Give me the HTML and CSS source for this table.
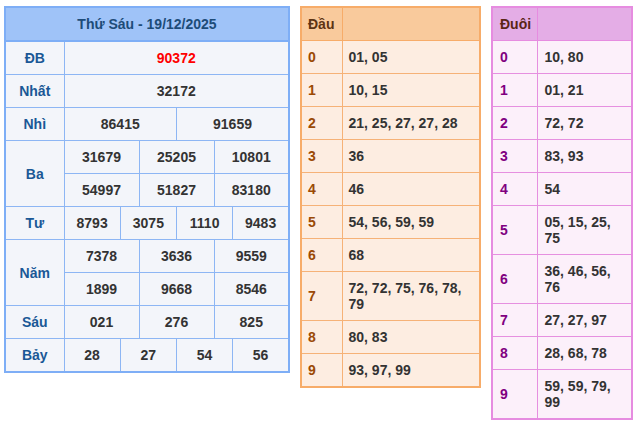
FILE: index.html
```html
<!DOCTYPE html>
<html lang="vi">
<head>
<meta charset="utf-8">
<title>Kết quả xổ số</title>
<link rel="stylesheet" href="styles.css">
</head>
<body>
<div class="wrap">
  <table class="kq">
    <colgroup>
      <col class="c-label">
      <col><col><col><col><col><col><col><col><col><col><col><col>
    </colgroup>
    <thead>
      <tr><th colspan="13" class="title">Thứ Sáu - 19/12/2025</th></tr>
    </thead>
    <tbody>
      <tr><td class="lbl">ĐB</td><td colspan="12" class="db">90372</td></tr>
      <tr><td class="lbl">Nhất</td><td colspan="12">32172</td></tr>
      <tr><td class="lbl">Nhì</td><td colspan="6">86415</td><td colspan="6">91659</td></tr>
      <tr><td class="lbl" rowspan="2">Ba</td><td colspan="4">31679</td><td colspan="4">25205</td><td colspan="4">10801</td></tr>
      <tr><td colspan="4">54997</td><td colspan="4">51827</td><td colspan="4">83180</td></tr>
      <tr><td class="lbl">Tư</td><td colspan="3">8793</td><td colspan="3">3075</td><td colspan="3">1110</td><td colspan="3">9483</td></tr>
      <tr><td class="lbl" rowspan="2">Năm</td><td colspan="4">7378</td><td colspan="4">3636</td><td colspan="4">9559</td></tr>
      <tr><td colspan="4">1899</td><td colspan="4">9668</td><td colspan="4">8546</td></tr>
      <tr><td class="lbl">Sáu</td><td colspan="4">021</td><td colspan="4">276</td><td colspan="4">825</td></tr>
      <tr><td class="lbl">Bảy</td><td colspan="3">28</td><td colspan="3">27</td><td colspan="3">54</td><td colspan="3">56</td></tr>
    </tbody>
  </table>

  <table class="lt dau">
    <colgroup><col class="c-key"><col></colgroup>
    <thead><tr><th>Đầu</th><th></th></tr></thead>
    <tbody>
      <tr><td class="k">0</td><td>01, 05</td></tr>
      <tr><td class="k">1</td><td>10, 15</td></tr>
      <tr><td class="k">2</td><td>21, 25, 27, 27, 28</td></tr>
      <tr><td class="k">3</td><td>36</td></tr>
      <tr><td class="k">4</td><td>46</td></tr>
      <tr><td class="k">5</td><td>54, 56, 59, 59</td></tr>
      <tr><td class="k">6</td><td>68</td></tr>
      <tr><td class="k">7</td><td>72, 72, 75, 76, 78, 79</td></tr>
      <tr><td class="k">8</td><td>80, 83</td></tr>
      <tr><td class="k">9</td><td>93, 97, 99</td></tr>
    </tbody>
  </table>

  <table class="lt duoi">
    <colgroup><col class="c-key"><col></colgroup>
    <thead><tr><th>Đuôi</th><th></th></tr></thead>
    <tbody>
      <tr><td class="k">0</td><td>10, 80</td></tr>
      <tr><td class="k">1</td><td>01, 21</td></tr>
      <tr><td class="k">2</td><td>72, 72</td></tr>
      <tr><td class="k">3</td><td>83, 93</td></tr>
      <tr><td class="k">4</td><td>54</td></tr>
      <tr><td class="k">5</td><td>05, 15, 25, 75</td></tr>
      <tr><td class="k">6</td><td>36, 46, 56, 76</td></tr>
      <tr><td class="k">7</td><td>27, 27, 97</td></tr>
      <tr><td class="k">8</td><td>28, 68, 78</td></tr>
      <tr><td class="k">9</td><td>59, 59, 79, 99</td></tr>
    </tbody>
  </table>
</div>
</body>
</html>
```

FILE: styles.css
```css
* { box-sizing: border-box; }
html, body { margin: 0; padding: 0; background: #ffffff; }
body {
  font-family: "Liberation Sans", Arial, sans-serif;
  font-size: 14px;
  color: #333333;
}
.wrap {
  display: flex;
  align-items: flex-start;
  gap: 10px;
  padding: 6px 4px;
}
table {
  border-collapse: collapse;
  table-layout: fixed;
}
th, td {
  font-weight: bold;
  line-height: 16px;
  padding: 8px 6px;
}

/* main results table */
.kq {
  width: 286px;
  border: 2px solid #7eaef6;
  background: #f3f5fa;
}
.kq .c-label { width: 59px; }
.kq th, .kq td {
  border: 1px solid #8db6f4;
  text-align: center;
  color: #333333;
}
.kq .title {
  background: #9fc3f8;
  color: #1d4c78;
  border: 2px solid #7eaef6;
}
.kq .lbl { color: #1a5896; }
.kq .db { color: #ff0000; }

/* loto tables */
.lt th, .lt td {
  text-align: left;
  padding: 8px 6px;
}
.dau {
  width: 181px;
  border: 2px solid #f7ac69;
  background: #fdede1;
}
.dau .c-key { width: 41px; }
.dau th, .dau td { border: 1px solid #f6b277; }
.dau th { background: #f9ca9c; color: #5e3413; border-color: #f7ac69; }
.dau .k { color: #9b4a05; }

.duoi {
  width: 142px;
  border: 2px solid #e68ce0;
  background: #fcf0fa;
}
.duoi .c-key { width: 45px; padding-left: 7px; }
.duoi th, .duoi td { border: 1px solid #e690e0; padding-left: 7px; }
.duoi th { background: #e4ade6; color: #5a2616; border-color: #e68ce0; }
.duoi .k { color: #800080; }
```
